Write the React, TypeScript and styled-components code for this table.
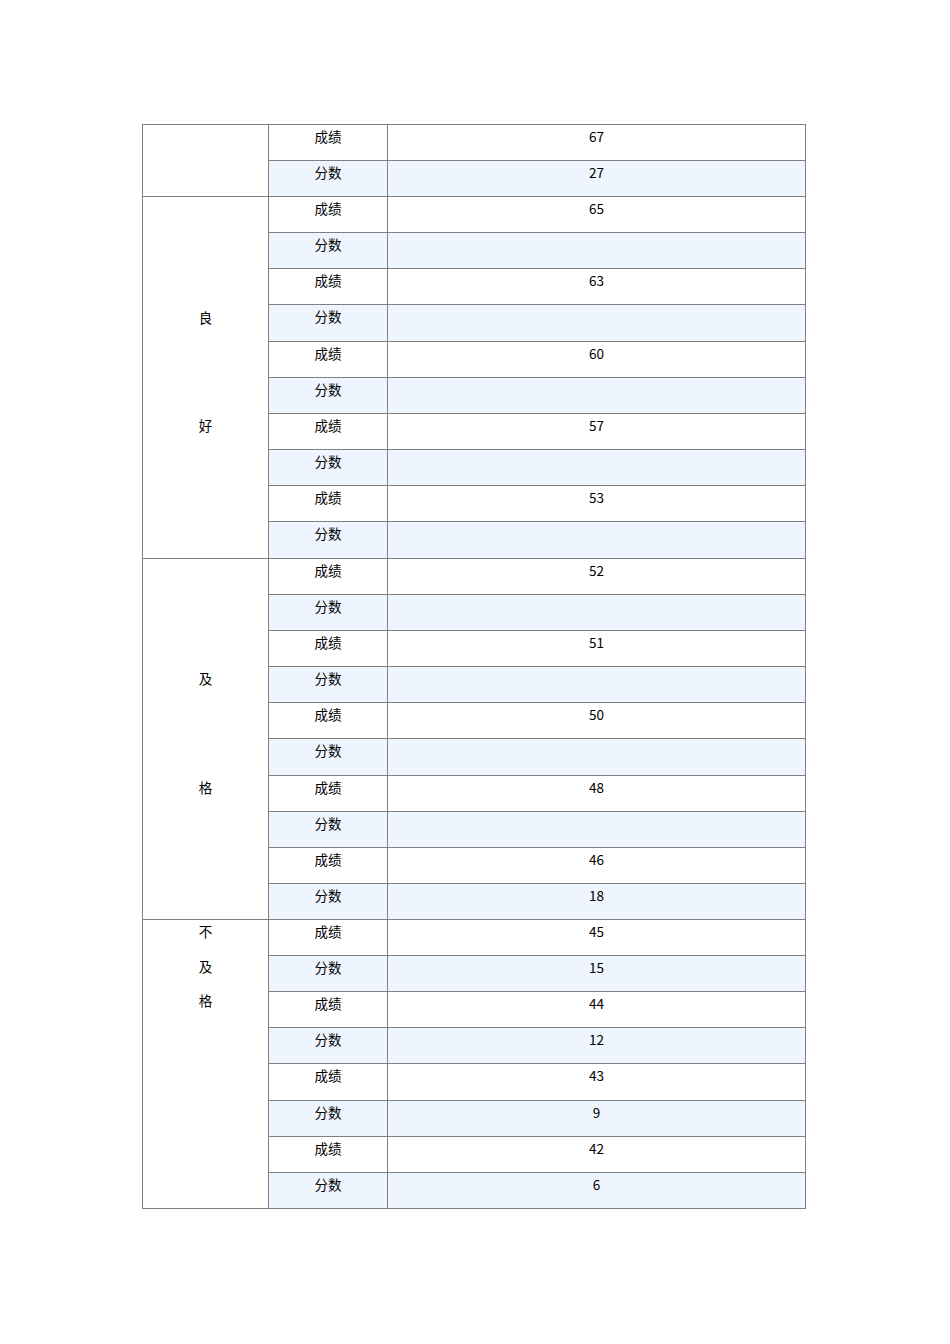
import React from "react";
import styled, { createGlobalStyle } from "styled-components";

const Global = createGlobalStyle`
  html, body { margin: 0; padding: 0; background: #ffffff; }
  body { font-family: "Noto Sans CJK SC", "DejaVu Sans", sans-serif; color: #000; }
`;

const Page = styled.div`
  width: 950px;
  min-height: 1344px;
  padding: 124px 0 0 142px;
  box-sizing: border-box;
`;

const Table = styled.table`
  border-collapse: collapse;
  table-layout: fixed;
  width: 663px;
`;

const Row = styled.tr<{ $h: number }>`
  height: ${(p) => p.$h}px;
`;

const Cell = styled.td<{ $blue?: boolean }>`
  border: 1px solid #808080;
  background: ${(p) => (p.$blue ? "#eef5fe" : "#ffffff")};
  text-align: center;
  vertical-align: top;
  padding: 2px 0 0 0;
  font-size: 13.5px;
  line-height: 18px;
  box-sizing: border-box;
`;

const GroupCell = styled.td`
  border: 1px solid #808080;
  background: #ffffff;
  text-align: center;
  vertical-align: top;
  padding: 0;
  font-size: 13.5px;
  line-height: 18px;
`;

const Stack = styled.div<{ $top: number; $gap: number }>`
  display: flex;
  flex-direction: column;
  align-items: center;
  padding-top: ${(p) => p.$top}px;
  gap: ${(p) => p.$gap}px;
`;

type Pair = { score: string; points: string };

const groups: { chars: string[]; top: number; gap: number; pairs: Pair[] }[] = [
  { chars: [], top: 0, gap: 0, pairs: [{ score: "67", points: "27" }] },
  {
    chars: ["良", "好"],
    top: 111,
    gap: 90,
    pairs: [
      { score: "65", points: "" },
      { score: "63", points: "" },
      { score: "60", points: "" },
      { score: "57", points: "" },
      { score: "53", points: "" },
    ],
  },
  {
    chars: ["及", "格"],
    top: 110,
    gap: 91,
    pairs: [
      { score: "52", points: "" },
      { score: "51", points: "" },
      { score: "50", points: "" },
      { score: "48", points: "" },
      { score: "46", points: "18" },
    ],
  },
  {
    chars: ["不", "及", "格"],
    top: 2,
    gap: 16.5,
    pairs: [
      { score: "45", points: "15" },
      { score: "44", points: "12" },
      { score: "43", points: "9" },
      { score: "42", points: "6" },
    ],
  },
];

const heights = [
  36, 36, 36, 36, 36, 37, 36, 36, 36, 36, 36, 37, 36, 36, 36, 36, 36, 37, 36, 36, 36, 36, 36, 36, 36,
  36, 37, 36, 36, 36,
];

export default function App() {
  let idx = 0;
  const rows: React.ReactNode[] = [];
  groups.forEach((g, gi) => {
    g.pairs.forEach((p, pi) => {
      const first = pi === 0;
      const h1 = heights[idx++];
      const h2 = heights[idx++];
      rows.push(
        <Row key={`${gi}-${pi}-a`} $h={h1}>
          {first && (
            <GroupCell rowSpan={g.pairs.length * 2}>
              <Stack $top={g.top} $gap={g.gap}>
                {g.chars.map((c, i) => (
                  <span key={i}>{c}</span>
                ))}
              </Stack>
            </GroupCell>
          )}
          <Cell>成绩</Cell>
          <Cell>{p.score}</Cell>
        </Row>
      );
      rows.push(
        <Row key={`${gi}-${pi}-b`} $h={h2}>
          <Cell $blue>分数</Cell>
          <Cell $blue>{p.points}</Cell>
        </Row>
      );
    });
  });

  return (
    <>
      <Global />
      <Page>
        <Table>
          <colgroup>
            <col style={{ width: 126 }} />
            <col style={{ width: 119 }} />
            <col style={{ width: 418 }} />
          </colgroup>
          <tbody>{rows}</tbody>
        </Table>
      </Page>
    </>
  );
}
